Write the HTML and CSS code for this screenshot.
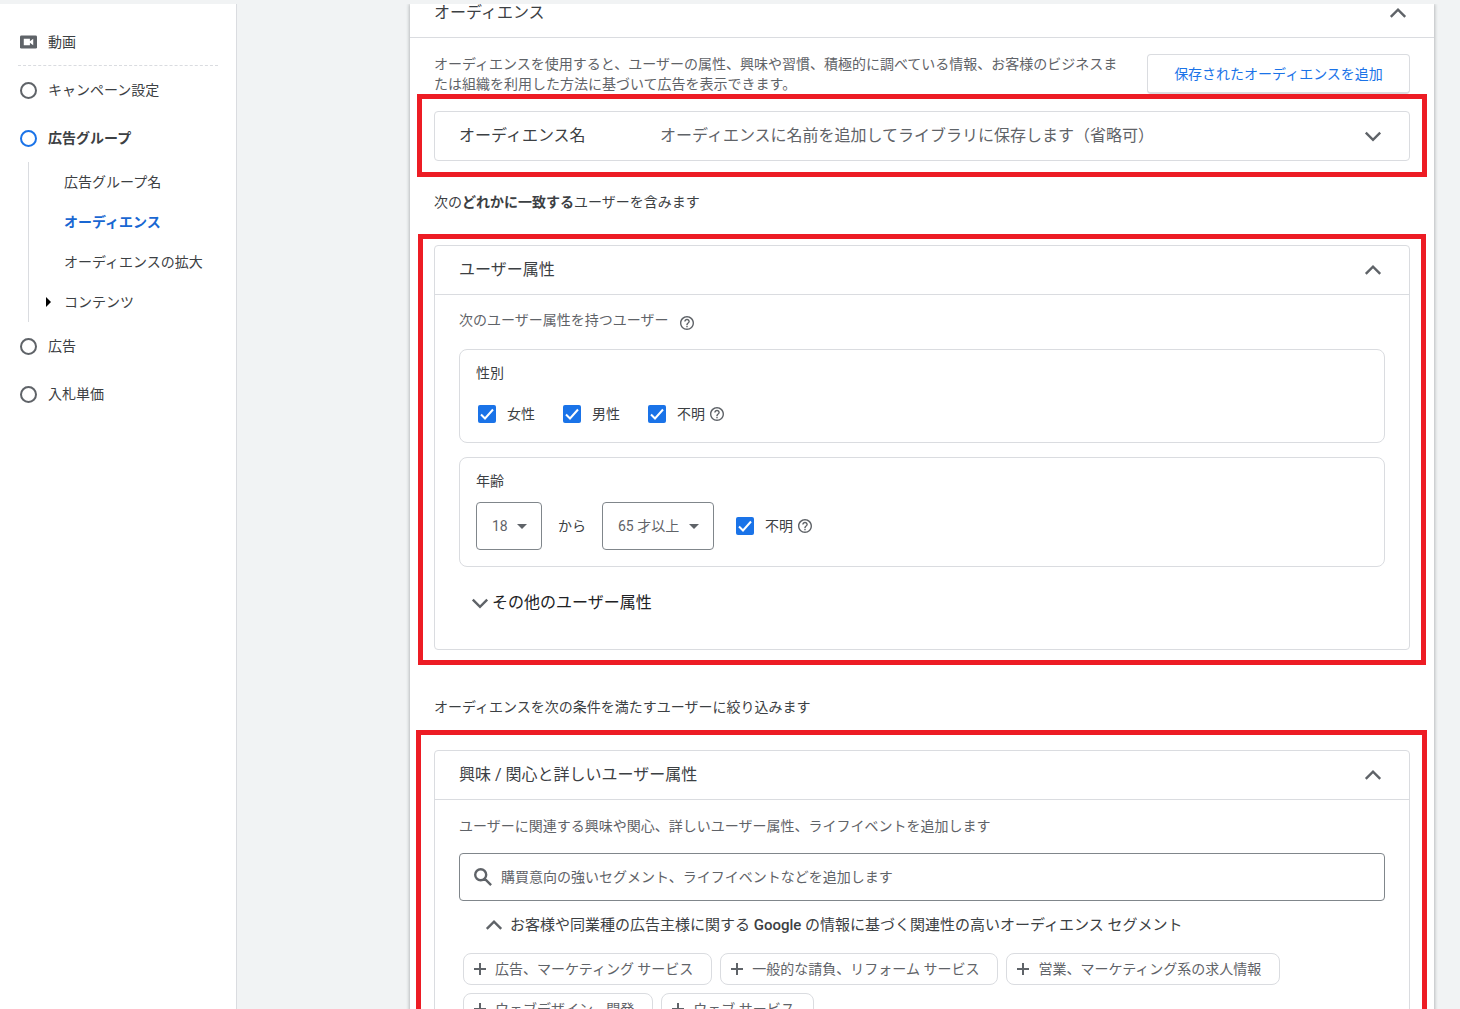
FILE: index.html
```html
<!DOCTYPE html>
<html lang="ja">
<head>
<meta charset="utf-8">
<meta name="viewport" content="width=device-width, initial-scale=1">
<title>オーディエンス</title>
<link rel="stylesheet" href="styles.css">
</head>
<body>
<svg class="defs" aria-hidden="true">
  <symbol id="up" viewBox="0 0 24 24"><path d="M4.8 15.8 12 8.6l7.2 7.2" fill="none" stroke="currentColor" stroke-width="2.4"/></symbol>
  <symbol id="down" viewBox="0 0 24 24"><path d="M4.8 8.6 12 15.8l7.2-7.2" fill="none" stroke="currentColor" stroke-width="2.4"/></symbol>
  <symbol id="plus" viewBox="0 0 14 14"><path d="M7 1v12M1 7h12" fill="none" stroke="currentColor" stroke-width="2"/></symbol>
  <symbol id="help" viewBox="2 2 20 20"><path fill="currentColor" d="M11 18h2v-2h-2v2zm1-16C6.480 2 2 6.480 2 12s4.480 10 10 10 10-4.480 10-10S17.520 2 12 2zm0 18c-4.410 0-8-3.590-8-8s3.590-8 8-8 8 3.590 8 8-3.590 8-8 8zm0-14c-2.210 0-4 1.790-4 4h2c0-1.100.9-2 2-2s2 .9 2 2c0 2-3 1.750-3 5h2c0-2.250 3-2.500 3-5 0-2.210-1.790-4-4-4z"/></symbol>
  <symbol id="caret" viewBox="0 0 10 5"><path fill="currentColor" d="M0 0h10L5 5z"/></symbol>
</svg>
<div class="app">
  <nav class="sidebar">
    <a class="item first" href="#video">
      <svg class="video" viewBox="0 0 18 14"><rect width="18" height="14" rx="1.500" fill="#5f6368"/><path fill="#fff" d="M4 3.500h6.500v2.800L14 3.500v7l-3.500-2.800v2.800H4z"/></svg>
      動画
    </a>
    <a class="item" href="#settings"><span class="ring"></span>キャンペーン設定</a>
    <a class="item current" href="#group"><span class="ring"></span>広告グループ</a>
    <div class="sub">
      <a href="#name">広告グループ名</a>
      <a class="active" href="#audience">オーディエンス</a>
      <a href="#expand">オーディエンスの拡大</a>
      <a class="tree" href="#content"><svg viewBox="0 0 5 10"><path d="M0 0l5 5-5 5z"/></svg>コンテンツ</a>
    </div>
    <a class="item" href="#ads"><span class="ring"></span>広告</a>
    <a class="item" href="#bids"><span class="ring"></span>入札単価</a>
  </nav>
  <main class="main">
    <section class="panel">
      <header class="panel-head">
        <h1>オーディエンス</h1>
        <button class="toggle" aria-label="閉じる"><svg><use href="#up"/></svg></button>
      </header>
      <div class="panel-body">
        <div class="intro">
          <p>オーディエンスを使用すると、ユーザーの属性、興味や習慣、積極的に調べている情報、お客様のビジネスまたは組織を利用した方法に基づいて広告を表示できます。</p>
          <button class="saved">保存されたオーディエンスを追加</button>
        </div>

        <section class="card mark mark-name">
          <div class="card-head">
            <h2 class="name">オーディエンス名</h2>
            <span class="hint">オーディエンスに名前を追加してライブラリに保存します（省略可）</span>
            <button class="toggle" aria-label="開く"><svg><use href="#down"/></svg></button>
          </div>
        </section>

        <p class="lead">次の<b>どれかに一致する</b>ユーザーを含みます</p>

        <section class="card mark mark-demo">
          <div class="card-head ruled">
            <h2>ユーザー属性</h2>
            <button class="toggle" aria-label="閉じる"><svg><use href="#up"/></svg></button>
          </div>
          <div class="card-body demo">
            <p class="note">次のユーザー属性を持つユーザー <svg class="help"><use href="#help"/></svg></p>
            <fieldset class="box">
              <legend>性別</legend>
              <div class="checks">
                <label><input type="checkbox" checked>女性</label>
                <label><input type="checkbox" checked>男性</label>
                <label><input type="checkbox" checked>不明<svg class="help"><use href="#help"/></svg></label>
              </div>
            </fieldset>
            <fieldset class="box">
              <legend>年齢</legend>
              <div class="ages">
                <span class="select from"><select aria-label="年齢の下限"><option>18</option></select><svg><use href="#caret"/></svg></span>
                <span>から</span>
                <span class="select to"><select aria-label="年齢の上限"><option>65 才以上</option></select><svg><use href="#caret"/></svg></span>
                <label><input type="checkbox" checked>不明<svg class="help"><use href="#help"/></svg></label>
              </div>
            </fieldset>
            <button class="more"><svg><use href="#down"/></svg>その他のユーザー属性</button>
          </div>
        </section>

        <p class="lead narrow">オーディエンスを次の条件を満たすユーザーに絞り込みます</p>

        <section class="card mark mark-interest">
          <div class="card-head ruled">
            <h2>興味 / 関心と詳しいユーザー属性</h2>
            <button class="toggle" aria-label="閉じる"><svg><use href="#up"/></svg></button>
          </div>
          <div class="card-body interest">
            <p class="note">ユーザーに関連する興味や関心、詳しいユーザー属性、ライフイベントを追加します</p>
            <label class="search">
              <svg viewBox="0 0 18 18"><path fill="none" stroke="#5f6368" stroke-width="2.400" d="M12.200 6.700a5.500 5.500 0 1 1-11 0 5.500 5.500 0 0 1 11 0zM10.600 10.600l6.500 6.500"/></svg>
              <input type="text" aria-label="セグメントを検索" placeholder="購買意向の強いセグメント、ライフイベントなどを追加します">
            </label>
            <button class="related"><svg><use href="#up"/></svg><span>お客様や同業種の広告主様に関する <b>Google</b> の情報に基づく関連性の高いオーディエンス セグメント</span></button>
            <div class="chips">
              <button><svg><use href="#plus"/></svg>広告、マーケティング サービス</button>
              <button><svg><use href="#plus"/></svg>一般的な請負、リフォーム サービス</button>
              <button><svg><use href="#plus"/></svg>営業、マーケティング系の求人情報</button>
              <button><svg><use href="#plus"/></svg>ウェブデザイン、開発</button>
              <button><svg><use href="#plus"/></svg>ウェブ サービス</button>
            </div>
          </div>
        </section>
      </div>
    </section>
  </main>
</div>
</body>
</html>
```
FILE: styles.css
```css
* {
  box-sizing: border-box;
}

body {
  margin: 0;
  background: #f1f3f4;
  color: #3c4043;
  font: 14px/20px Roboto, "Noto Sans CJK JP", sans-serif;
}

h1, h2, p, fieldset {
  margin: 0;
  padding: 0;
}

h1, h2 {
  font-size: 16px;
  font-weight: 400;
}

a {
  color: inherit;
  text-decoration: none;
}

button, input, select {
  font: inherit;
  color: inherit;
}

button {
  padding: 0;
  border: 0;
  background: none;
  cursor: pointer;
}

svg {
  flex: none;
}

.defs {
  position: absolute;
  width: 0;
  height: 0;
}

.app {
  display: flex;
  height: 100vh;
  padding-top: 4px;
  overflow: hidden;
}

/* Sidebar */
.sidebar {
  flex: none;
  width: 237px;
  padding: 14px 18px 0;
  background: #fff;
  border-right: 1px solid #dadce0;
}

.item {
  display: flex;
  align-items: center;
  gap: 11px;
  height: 48px;
  padding-left: 2px;
}

.item.first {
  border-bottom: 1px dashed #dadce0;
}

.video {
  width: 17px;
  height: 14px;
}

.ring {
  width: 17px;
  height: 17px;
  border: 2px solid #5f6368;
  border-radius: 50%;
}

.current {
  font-weight: 700;
}

.current .ring {
  border-color: #1a73e8;
}

.sub {
  margin-left: 10px;
  padding-left: 35px;
  border-left: 1px solid #dadce0;
}

.sub a {
  display: flex;
  align-items: center;
  height: 40px;
}

.sub .active {
  color: #1967d2;
  font-weight: 700;
}

.sub .tree {
  gap: 13px;
  margin-left: -18px;
}

.tree svg {
  width: 5px;
  height: 10px;
}

/* Main panel */
.main {
  flex: 1;
  min-width: 0;
  padding: 0 26px 0 173px;
}

.panel {
  background: #fff;
  box-shadow: 0 1px 3px 1px rgba(60, 64, 67, .3);
  clip-path: inset(0 -8px 0 -8px);
}

.panel-head {
  display: flex;
  align-items: center;
  justify-content: space-between;
  height: 34px;
  padding: 0 24px 16px;
  border-bottom: 1px solid #dadce0;
}

.toggle {
  display: flex;
  margin-left: auto;
  color: #5f6368;
}

.toggle svg {
  width: 24px;
  height: 24px;
}

.panel-body {
  padding: 16px 24px;
}

.intro {
  display: flex;
  gap: 16px;
}

.intro p {
  flex: 1;
  color: #5f6368;
}

.saved {
  width: 263px;
  height: 40px;
  border: 1px solid #dadce0;
  border-bottom-width: 2px;
  border-radius: 4px;
  color: #1a73e8;
}

.card {
  position: relative;
  border: 1px solid #dadce0;
  border-radius: 4px;
}

.card-head {
  display: flex;
  align-items: center;
  height: 48px;
  padding: 0 24px;
}

.ruled {
  height: 49px;
  border-bottom: 1px solid #dadce0;
}

.name {
  width: 201px;
}

.hint {
  font-size: 16px;
  color: #5f6368;
}

/* Highlight frames drawn over the cards */
.mark::after {
  content: "";
  position: absolute;
  border: 5px solid #ed1c24;
  pointer-events: none;
}

.mark-name {
  margin-top: 17px;
}

.mark-name::after {
  inset: -18px -18px -17px;
}

.mark-demo::after {
  inset: -12px -17px -16px;
}

.mark-interest::after {
  inset: -21px -18px -16px -19px;
}

.lead {
  padding: 31px 0 33px;
}

.lead.narrow {
  padding-top: 47px;
}

.card-body {
  padding: 0 24px;
}

.note {
  display: flex;
  align-items: flex-end;
  gap: 12px;
  color: #5f6368;
}

.demo {
  padding-top: 15px;
  padding-bottom: 34px;
}

.help {
  width: 14px;
  height: 14px;
  color: #5f6368;
}

.box {
  margin-top: 14px;
  padding: 13px 16px 15px;
  border: 1px solid #dadce0;
  border-radius: 8px;
}

.note + .box {
  margin-top: 19px;
}

.box legend {
  float: left;
  width: 100%;
  padding: 0;
}

.checks, .ages {
  clear: both;
  display: flex;
  align-items: center;
}

.checks {
  gap: 28px;
  height: 44px;
  padding: 18px 2px 0;
}

.ages {
  gap: 16px;
  height: 60px;
  padding-top: 10px;
}

.checks label, .ages label {
  display: flex;
  align-items: center;
}

.ages label {
  margin-left: 6px;
}

label .help {
  margin-left: 5px;
}

input[type="checkbox"] {
  appearance: none;
  width: 18px;
  height: 18px;
  margin: 0 11px 0 0;
  border-radius: 2px;
  background: #1a73e8 url("data:image/svg+xml,%3Csvg xmlns='http://www.w3.org/2000/svg' viewBox='0 0 18 18'%3E%3Cpath d='M3 9.500l4 4 8-9' fill='none' stroke='white' stroke-width='2'/%3E%3C/svg%3E");
}

.select {
  position: relative;
}

.select select {
  appearance: none;
  width: 100%;
  height: 48px;
  padding: 0 15px;
  border: 1px solid #80868b;
  border-radius: 4px;
  background: none;
  color: #5f6368;
}

.select svg {
  position: absolute;
  right: 15px;
  top: 22px;
  width: 10px;
  height: 5px;
  color: #5f6368;
  pointer-events: none;
}

.from {
  width: 66px;
}

.to {
  width: 112px;
}

.more {
  display: flex;
  align-items: center;
  margin: 24px 0 0 9px;
  font-size: 16px;
  line-height: 24px;
  color: #202124;
}

.more svg, .related svg {
  width: 24px;
  height: 24px;
  color: #5f6368;
}

.interest {
  padding-top: 16px;
}

.search {
  display: flex;
  align-items: center;
  gap: 9px;
  height: 48px;
  margin-top: 17px;
  padding: 0 14px;
  border: 1px solid #80868b;
  border-radius: 4px;
}

.search svg {
  width: 18px;
  height: 18px;
}

.search input {
  flex: 1;
  padding: 0;
  border: 0;
  outline: 0;
  background: none;
}

.search input::placeholder {
  color: #5f6368;
  opacity: 1;
}

.related {
  display: flex;
  align-items: center;
  gap: 4px;
  margin: 12px 0 0 23px;
  font-size: 15px;
  line-height: 24px;
}

.related b {
  font-weight: 500;
}

.chips {
  display: flex;
  flex-wrap: wrap;
  gap: 8px;
  margin-top: 16px;
  padding: 0 4px;
}

.chips button {
  display: flex;
  align-items: center;
  gap: 8px;
  height: 32px;
  padding: 0 18px 0 9px;
  border: 1px solid #dadce0;
  border-radius: 8px;
  color: #5f6368;
}

.chips svg {
  width: 14px;
  height: 14px;
}
```
